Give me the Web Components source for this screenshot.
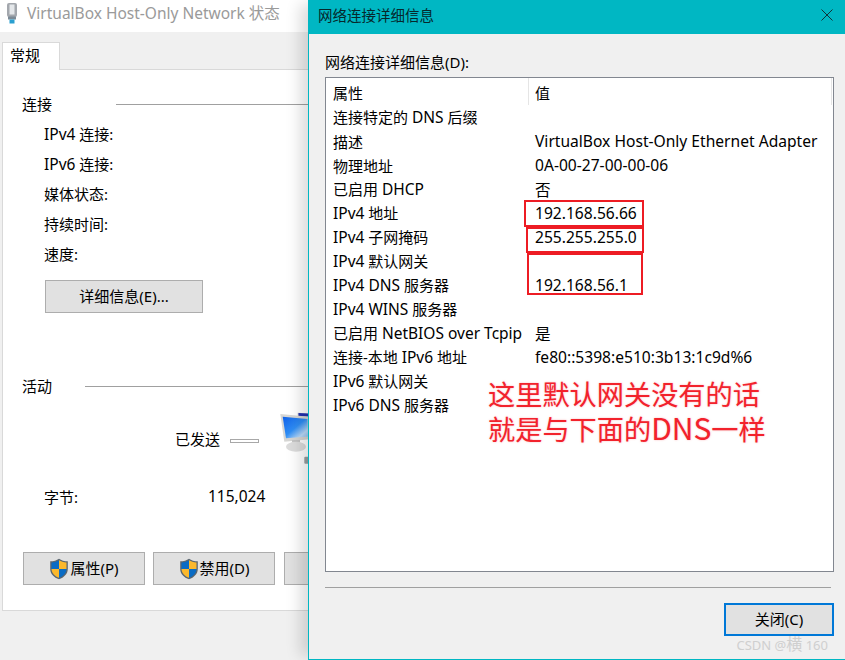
<!DOCTYPE html>
<html lang="zh"><head><meta charset="utf-8"><title>VirtualBox Host-Only Network 状态</title>
<style>
html,body{margin:0;padding:0;background:#f0f0f0;overflow:hidden}
body{width:845px;height:660px;font:15px "Noto Sans","Noto Sans CJK SC",sans-serif;color:#000}
.e{font-size:15.5px}
.b{font-size:16px}
.d{font-size:30px;line-height:1}
</style></head><body>
<win-desktop>
  <status-window>
    <group-heading w="94" style="margin-top:24px">连接</group-heading>
    <info-row first><span class="e">IPv4</span> 连接:</info-row>
    <info-row><span class="e">IPv6</span> 连接:</info-row>
    <info-row zh>媒体状态:</info-row>
    <info-row zh>持续时间:</info-row>
    <info-row zh>速度:</info-row>
    <win-button style="margin:11px 0 0 42px;width:158px">详细信息(E)...</win-button>
    <group-heading w="63" style="margin-top:63px">活动</group-heading>
    <activity-row></activity-row>
    <info-row short>字节:<span slot="value" class="e">115,024</span></info-row>
    <action-bar>
      <win-button shield style="width:122px">属性(P)</win-button>
      <win-button shield style="width:122px">禁用(D)</win-button>
      <win-button style="width:122px"></win-button>
    </action-bar>
  </status-window>
  <details-window>
    <detail-list>
      <detail-row head>属性<span slot="value">值</span></detail-row>
      <detail-row>连接特定的 <span class="e">DNS</span> 后缀</detail-row>
      <detail-row>描述<span slot="value">VirtualBox Host-Only Ethernet Adapter</span></detail-row>
      <detail-row>物理地址<span slot="value">0A-00-27-00-00-06</span></detail-row>
      <detail-row>已启用 <span class="e">DHCP</span><span slot="value">否</span></detail-row>
      <detail-row><span class="e">IPv4</span> 地址<span slot="value">192.168.56.66</span></detail-row>
      <detail-row><span class="e">IPv4</span> 子网掩码<span slot="value">255.255.255.0</span></detail-row>
      <detail-row><span class="e">IPv4</span> 默认网关</detail-row>
      <detail-row><span class="e">IPv4 DNS</span> 服务器<span slot="value">192.168.56.1</span></detail-row>
      <detail-row><span class="e">IPv4 WINS</span> 服务器</detail-row>
      <detail-row>已启用 <span class="e">NetBIOS over Tcpip</span><span slot="value">是</span></detail-row>
      <detail-row>连接-本地 <span class="e">IPv6</span> 地址<span slot="value">fe80::5398:e510:3b13:1c9d%6</span></detail-row>
      <detail-row><span class="e">IPv6</span> 默认网关</detail-row>
      <detail-row><span class="e">IPv6 DNS</span> 服务器</detail-row>
    </detail-list>
  </details-window>
  <red-box style="left:524px;top:200px;width:120px;height:27px"></red-box>
  <red-box style="left:526px;top:227px;width:118px;height:26px"></red-box>
  <red-box style="left:527px;top:253px;width:116px;height:42px"></red-box>
  <red-note>这里默认网关没有的话<br>就是与下面的<span class="d">DNS</span>一样</red-note>
  <water-mark>CSDN @<span class="b">横</span> 160</water-mark>
</win-desktop>
<script>
const SHIELD=`<svg width="20" height="22" viewBox="0 0 18 20"><path d="M9 .6C7 2 4 3 1 3v7c0 4.500 3.500 7.800 8 9.400 4.500-1.600 8-4.900 8-9.400V3C14 3 11 2 9 .6z" fill="#5a6670"/><path d="M9 2C7.300 3.100 4.800 3.900 2.200 4v6H9z" fill="#0a6cc4"/><path d="M9 2c1.700 1.100 4.200 1.900 6.800 2v6H9z" fill="#fbb82c"/><path d="M2.200 10H9v8C5.300 16.600 2.400 14 2.200 10z" fill="#fbb82c"/><path d="M15.800 10H9v8c3.700-1.400 6.600-4 6.800-8z" fill="#0a6cc4"/></svg>`;
function def(name,html,init){
  customElements.define(name,class extends HTMLElement{
    constructor(){super();this.attachShadow({mode:'open'}).innerHTML=html;}
    connectedCallback(){init&&init.call(this,this.shadowRoot);}
  });
}
def('win-desktop',`<style>:host{display:block;position:relative;width:845px;height:660px;overflow:hidden}</style><slot></slot>`);
def('status-window',`<style>
:host{display:block;position:absolute;left:0;top:0;width:345px;height:660px;background:#f0f0f0}
.title{box-sizing:border-box;height:32px;padding:0 0 8px 4px;background:#fff;display:flex;align-items:center;gap:7px;color:#9a9a9a;font-size:15.500px}
.title svg{flex:none}
.tabs{height:37px;padding:10px 0 0 2px;box-sizing:border-box;display:flex;align-items:flex-end}
.tab{box-sizing:border-box;width:58px;height:28px;background:#fff;border:1px solid #d9d9d9;border-bottom:0;padding-left:7px;line-height:25px;margin-bottom:-1px;position:relative;z-index:1}
.panel{box-sizing:border-box;height:542px;margin-left:2px;background:#fff;border:1px solid #d9d9d9;display:flex;flex-direction:column}
</style>
<div class="title"><svg width="16" height="24" viewBox="0 -1 16 24"><rect x="3" y="2" width="10" height="14" rx="2" fill="#a3a7ad"/><rect x="5.500" y="3.500" width="5" height="10" fill="#e4e7ea"/><rect x="4" y="15.500" width="8" height="3" fill="#7c8a96"/><rect x="5.500" y="18.500" width="5" height="4" fill="#2a9fd0"/></svg><span>VirtualBox Host-Only Network 状态</span></div>
<div class="tabs"><div class="tab">常规</div></div>
<div class="panel"><slot></slot></div>`);
def('group-heading',`<style>:host{display:flex;align-items:center;height:20px;padding-left:19px}
#l{flex:none;margin-bottom:2px}i{flex:1;height:1px;background:#a0a0a0}</style><span id="l"><slot></slot></span><i></i>`,function(s){s.getElementById('l').style.width=this.getAttribute('w')+'px';});
def('info-row',`<style>:host{display:flex;align-items:center;height:30px;padding-left:41px}
:host([first]){margin-top:5px}
:host([zh]){box-sizing:border-box;padding-bottom:2px}
#a{width:164px;flex:none}
:host([short]){height:20px;margin-top:12px;box-sizing:border-box;padding-bottom:2px}
</style><span id="a"><slot></slot></span><slot name="value"></slot>`);
def('win-button',`<style>:host{display:flex;align-items:center;justify-content:center;flex:none;box-sizing:border-box;height:33px;background:#e1e1e1;border:1px solid #adadad;padding-bottom:2px}
svg{margin:2px 1px 0 0;display:block}</style><span id="i" style="display:contents"></span><slot></slot>`,function(s){if(this.hasAttribute('shield'))s.getElementById('i').innerHTML=SHIELD;});
def('activity-row',`<style>:host{display:flex;align-items:center;height:70px;padding-left:172px;margin-top:9px;box-sizing:border-box}
span{margin-bottom:4px}
.bar{width:27px;border:1px solid #a8a8a8;height:2px;margin-left:10px;margin-top:2px;flex:none;background:#fff}
svg{margin-left:20px;margin-top:-2px;flex:none}</style><span>已发送</span><div class="bar"></div>
<svg width="50" height="58" viewBox="0 0 50 58"><defs><linearGradient id="sc" x1="0" y1="0" x2="1" y2="1"><stop offset="0" stop-color="#0f5fe8"/><stop offset=".5" stop-color="#2f8ef5"/><stop offset=".8" stop-color="#bcdcfa"/><stop offset="1" stop-color="#8fc0f4"/></linearGradient></defs>
<path d="M18.700 2.700l17 1v14l-17-2z" fill="#c8ccd2"/><path d="M19.500 3l14 .8v3l-14-.8z" fill="#2330b0"/>
<path d="M1.300 4L30 6.700 31 29.300 5.300 31.700z" fill="#d6d6d4"/><path d="M3.700 6.700L28.500 9l.5 17.500L7 28.300z" fill="url(#sc)"/>
<rect x="13" y="30" width="8" height="5" fill="#c4c4c4"/><ellipse cx="17" cy="36.700" rx="10" ry="5" fill="#dcdcdc"/><rect x="25.300" y="46.700" width="7" height="7" rx="1" fill="#9aa0a2"/></svg>`);
def('action-bar',`<style>:host{display:flex;gap:8px;margin:45px 0 0 20px}::slotted(:last-child){margin-left:1px}</style><slot></slot>`);
def('details-window',`<style>
:host{display:flex;flex-direction:column;position:absolute;left:308px;top:0;width:537px;height:660px;box-sizing:border-box;background:#f0f0f0;border-left:1px solid #00b7c3;border-bottom:1px solid #00b7c3;box-shadow:-12px 0 14px -4px rgba(0,0,0,.14)}
.title{flex:none;box-sizing:border-box;height:34px;margin-left:-1px;background:#00b7c3;display:flex;align-items:center;justify-content:space-between;padding:0 12px 6px 10px;font-size:14.500px;color:#06282c}
.title svg{flex:none;margin-top:1px}
.body{flex:1;padding:18px 11px 0 16px;display:flex;flex-direction:column}
.lab{height:20px;line-height:20px;margin-bottom:5px}
.sep{height:1px;background:#a0a0a0;margin:15px 3px 15px 0}
.foot{display:flex;justify-content:flex-end}
.foot win-button{width:110px;border:2px solid #0078d7}
</style>
<div class="title"><span>网络连接详细信息</span><svg width="12" height="12" viewBox="0 0 12 12"><path d="M.5.500l11 11M11.500.500l-11 11" stroke="#123236" fill="none" stroke-width="1"/></svg></div>
<div class="body"><div class="lab">网络连接详细信息(D):</div><slot></slot><div class="sep"></div><div class="foot"><win-button>关闭(C)</win-button></div></div>`);
def('detail-list',`<style>:host{display:block;flex:none;box-sizing:border-box;height:495px;background:#fff;border:1px solid #828790}</style><slot></slot>`);
def('detail-row',`<style>:host{display:flex;align-items:center;height:24px}
#n{width:202px;flex:none;box-sizing:border-box;padding-left:7px;white-space:nowrap}
#v{padding-left:7px;white-space:nowrap;font-size:15.600px}
:host([head]){height:27px;padding-top:3px;box-sizing:border-box}
:host([head]) #n{border-right:1px solid #e5e5e5;height:27px;margin-top:-3px;padding-top:3px;line-height:24px;width:203px}
:host([head]) #v{padding-left:6px;flex:1;border-right:1px solid #e5e5e5;height:27px;margin:-3px 1px 0 0;padding-top:3px;line-height:24px;box-sizing:border-box;font-size:15px}
</style><span id="n"><slot></slot></span><span id="v"><slot name="value"></slot></span>`);
def('red-box',`<style>:host{display:block;position:absolute;box-sizing:border-box;border:2px solid #ed1c24}</style>`);
def('red-note',`<style>:host{display:block;position:absolute;left:488px;top:376px;color:#f2222c;font:27.200px/35px "Noto Sans CJK SC","Noto Sans",sans-serif;white-space:nowrap;text-shadow:0 0 2px rgba(245,120,125,.55)}</style><slot></slot>`);
def('water-mark',`<style>:host{display:block;position:absolute;right:17px;top:634px;color:#cfcfcf;font-size:13px;line-height:20px;white-space:nowrap}</style><slot></slot>`);
</script>
</body></html>
